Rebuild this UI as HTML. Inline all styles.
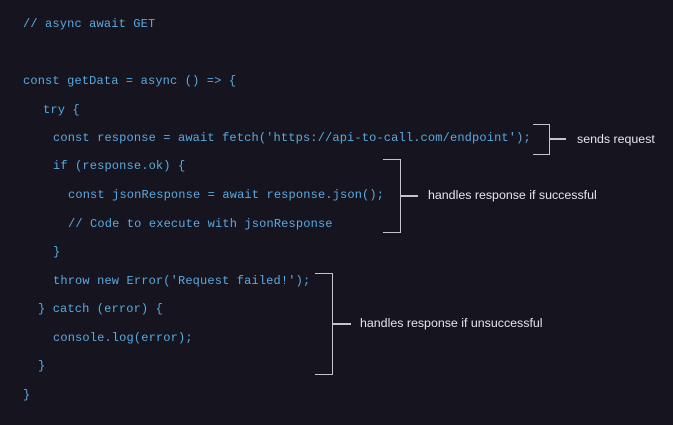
<!DOCTYPE html>
<html><head><meta charset="utf-8"><style>
html,body{margin:0;padding:0;background:#16151f;width:673px;height:425px;overflow:hidden;position:relative}
.c{position:absolute;font-family:"Liberation Mono",monospace;font-size:12px;letter-spacing:0.15px;color:#5aa9e0;white-space:pre;line-height:16px}
.l{position:absolute;font-family:"Liberation Sans",sans-serif;font-size:12.4px;color:#e4e4ea;white-space:pre;line-height:16px}
.b{position:absolute;border:1.5px solid #c4c4cc;border-left:none}
.a{position:absolute;height:1.5px;background:#c4c4cc}
</style></head><body>
<div class="c" style="left:23px;top:16px">// async await GET</div>
<div class="c" style="left:23px;top:73px">const getData = async () =&gt; {</div>
<div class="c" style="left:43px;top:102px">try {</div>
<div class="c" style="left:53px;top:130px">const response = await fetch('https://api-to-call.com/endpoint');</div>
<div class="c" style="left:53px;top:158px">if (response.ok) {</div>
<div class="c" style="left:68px;top:187px">const jsonResponse = await response.json();</div>
<div class="c" style="left:68px;top:216px">// Code to execute with jsonResponse</div>
<div class="c" style="left:53px;top:244px">}</div>
<div class="c" style="left:53px;top:273px">throw new Error('Request failed!');</div>
<div class="c" style="left:38px;top:301px">} catch (error) {</div>
<div class="c" style="left:53px;top:330px">console.log(error);</div>
<div class="c" style="left:38px;top:358px">}</div>
<div class="c" style="left:23px;top:387px">}</div>

<div class="b" style="left:533px;top:124px;width:16px;height:29px"></div>
<div class="a" style="left:550px;top:138px;width:16px"></div>
<div class="l" style="left:577px;top:131px">sends request</div>

<div class="b" style="left:383px;top:159px;width:17px;height:72px"></div>
<div class="a" style="left:401px;top:195px;width:17px"></div>
<div class="l" style="left:428px;top:187px">handles response if successful</div>

<div class="b" style="left:315px;top:273px;width:17px;height:100px"></div>
<div class="a" style="left:333px;top:323px;width:18px"></div>
<div class="l" style="left:360px;top:315px">handles response if unsuccessful</div>
</body></html>
